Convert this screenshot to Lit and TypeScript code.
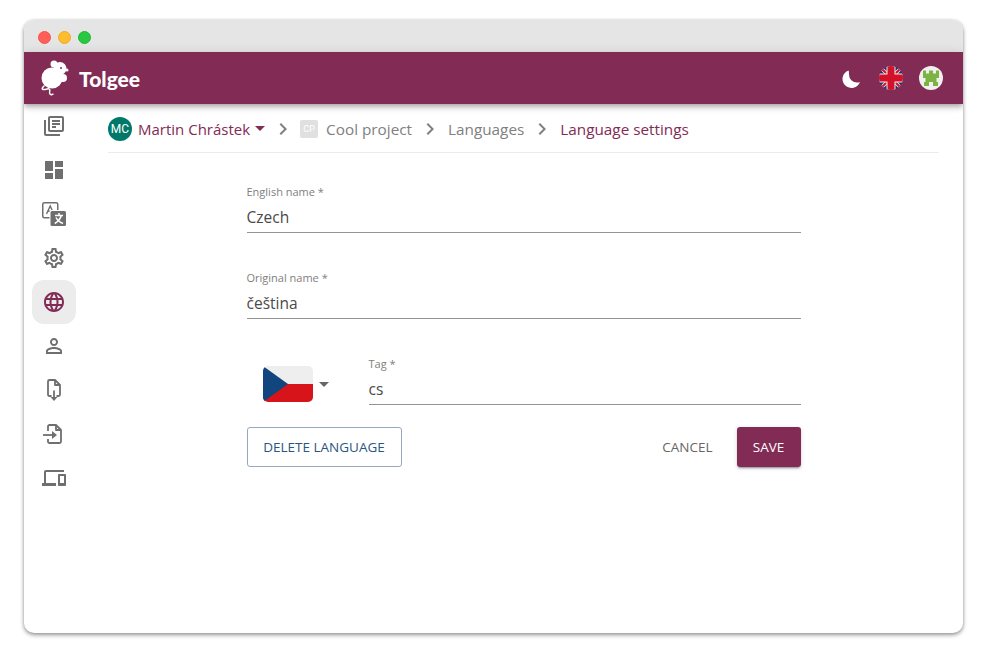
import { LitElement, html, css, svg } from "lit";
import { customElement } from "lit/decorators.js";

const ICONS = [
  svg`<path d="M4 6H2v14c0 1.1.9 2 2 2h14v-2H4V6zm16-4H8c-1.1 0-2 .9-2 2v12c0 1.1.9 2 2 2h12c1.1 0 2-.9 2-2V4c0-1.1-.9-2-2-2zm0 14H8V4h12v12zM10 9h8v2h-8zm0 3h4v2h-4zm0-6h8v2h-8z"/>`,
  svg`<path d="M3 13h8V3H3v10zm0 8h8v-6H3v6zm10 0h8V11h-8v10zm0-18v6h8V3h-8z"/>`,
  svg`<rect x=".75" y=".75" width="15" height="15" rx="1.500" fill="none" stroke="currentColor" stroke-width="1.500"/>
    <path d="M4.500 12L8.200 4l3.700 8M5.800 9.300h4.800" fill="none" stroke="currentColor" stroke-width="1.400"/>
    <rect x="7.500" y="8" width="16.500" height="16" rx="1.500" fill="#fff"/>
    <rect x="8.500" y="9" width="15.500" height="15" rx="1.500"/>
    <path d="M17 11v2.500M13 13.500h8M19.200 13.500c-.6 3-3 6-6.400 8M14 15.500c1.200 2.500 3.500 4.700 7 6" fill="none" stroke="#fff" stroke-width="1.500"/>`,
  svg`<path d="M19.43 12.98c.04-.32.07-.64.07-.98 0-.34-.03-.66-.07-.98l2.11-1.65c.19-.15.24-.42.12-.64l-2-3.46c-.09-.16-.26-.25-.44-.25-.06 0-.12.01-.17.03l-2.490 1c-.52-.4-1.080-.73-1.690-.98l-.38-2.650C14.460 2.180 14.250 2 14 2h-4c-.25 0-.46.18-.49.42l-.38 2.650c-.61.25-1.170.59-1.690.98l-2.490-1c-.06-.02-.12-.03-.18-.03-.17 0-.34.09-.43.25l-2 3.460c-.13.22-.07.49.12.64l2.110 1.650c-.04.32-.07.65-.07.98 0 .33.03.66.07.98l-2.110 1.650c-.19.15-.24.42-.12.64l2 3.460c.09.16.26.25.44.25.06 0 .12-.01.17-.03l2.490-1c.52.4 1.080.73 1.690.98l.38 2.650c.03.24.24.42.49.42h4c.25 0 .46-.18.49-.42l.38-2.650c.61-.25 1.170-.59 1.690-.98l2.490 1c.06.02.12.03.18.03.17 0 .34-.09.43-.25l2-3.460c.12-.22.07-.49-.12-.64l-2.110-1.650zm-1.980-1.710c.04.31.05.52.05.73 0 .21-.02.43-.05.73l-.14 1.130.89.7 1.080.84-.7 1.210-1.270-.51-1.040-.42-.9.68c-.43.32-.84.56-1.250.73l-1.060.43-.16 1.130-.2 1.350h-1.400l-.19-1.350-.16-1.130-1.060-.43c-.43-.18-.83-.41-1.230-.71l-.91-.7-1.060.43-1.270.51-.7-1.210 1.080-.84.89-.7-.14-1.130c-.03-.31-.05-.54-.05-.74s.02-.43.05-.73l.14-1.130-.89-.7-1.080-.84.7-1.210 1.270.51 1.040.42.9-.68c.43-.32.84-.56 1.250-.73l1.060-.43.16-1.130.2-1.350h1.390l.19 1.350.16 1.130 1.060.43c.43.18.83.41 1.230.71l.91.7 1.060-.43 1.270-.51.7 1.210-1.070.85-.89.7.14 1.130zM12 8c-2.210 0-4 1.790-4 4s1.790 4 4 4 4-1.790 4-4-1.790-4-4-4zm0 6c-1.100 0-2-.9-2-2s.9-2 2-2 2 .9 2 2-.9 2-2 2z"/>`,
  svg`<path d="M11.99 2C6.47 2 2 6.48 2 12s4.47 10 9.99 10C17.52 22 22 17.52 22 12S17.52 2 11.99 2zm6.93 6h-2.950c-.32-1.250-.78-2.450-1.380-3.560 1.840.63 3.370 1.910 4.330 3.560zM12 4.040c.83 1.200 1.480 2.530 1.910 3.960h-3.820c.43-1.430 1.080-2.760 1.910-3.960zM4.260 14C4.100 13.360 4 12.690 4 12s.1-1.360.26-2h3.380c-.08.66-.14 1.320-.14 2 0 .68.06 1.340.14 2H4.260zm.82 2h2.950c.32 1.250.78 2.450 1.380 3.560-1.840-.63-3.370-1.900-4.330-3.560zm2.950-8H5.080c.96-1.660 2.490-2.930 4.330-3.560C8.810 5.550 8.350 6.750 8.030 8zM12 19.960c-.83-1.200-1.480-2.530-1.910-3.960h3.820c-.43 1.430-1.080 2.760-1.910 3.960zM14.340 14H9.660c-.09-.66-.16-1.320-.16-2 0-.68.07-1.350.16-2h4.680c.09.65.16 1.320.16 2 0 .68-.07 1.340-.16 2zm.25 5.560c.6-1.110 1.060-2.310 1.380-3.560h2.950c-.96 1.650-2.490 2.930-4.330 3.560zM16.360 14c.08-.66.14-1.320.14-2 0-.68-.06-1.340-.14-2h3.380c.16.64.26 1.310.26 2s-.1 1.360-.26 2h-3.380z"/>`,
  svg`<path d="M12 5.900c1.160 0 2.100.94 2.100 2.100s-.94 2.100-2.100 2.100S9.900 9.160 9.900 8s.94-2.100 2.100-2.100m0 9c2.970 0 6.100 1.460 6.100 2.100v1.100H5.900V17c0-.64 3.130-2.100 6.100-2.100M12 4C9.790 4 8 5.790 8 8s1.790 4 4 4 4-1.790 4-4-1.790-4-4-4zm0 9c-2.670 0-8 1.340-8 4v3h16v-3c0-2.660-5.330-4-8-4z"/>`,
  svg`<g fill="none" stroke="currentColor" stroke-width="1.800" stroke-linejoin="round"><path d="M9.500 18H7.500A1.500 1.500 0 0 1 6 16.500v-13A1.500 1.500 0 0 1 7.500 2H13l5 5v9.500a1.500 1.500 0 0 1-1.500 1.500H14.500"/><path d="M13 2v5h5"/><path d="M12 12.500v7"/></g><path d="M8.500 19h7L12 23z"/>`,
  svg`<g fill="none" stroke="currentColor" stroke-width="1.800" stroke-linejoin="round"><path d="M6 9V4.500A1.500 1.500 0 0 1 7.500 3H14l5 5v11.500a1.500 1.500 0 0 1-1.500 1.500h-10A1.500 1.500 0 0 1 6 19.500V17"/><path d="M14 3v5h5"/><path d="M1 13h9"/></g><path d="M10 9l5 4-5 4z"/>`,
  svg`<path d="M4 6h18V4H4c-1.100 0-2 .9-2 2v11H0v3h14v-3H4V6zm19 2h-6c-.55 0-1 .45-1 1v10c0 .55.45 1 1 1h6c.55 0 1-.45 1-1V9c0-.55-.45-1-1-1zm-1 9h-4v-7h4v7z"/>`,
];

@customElement("app-root")
export class AppRoot extends LitElement {
  static styles = css`
    :host {
      display: block;
      width: 987px;
      height: 661px;
      padding: 20px 24px 28px;
      box-sizing: border-box;
      background: #fff;
      font-family: "Open Sans", "Noto Sans", sans-serif;
    }
    .window {
      height: 613px;
      border-radius: 10px;
      overflow: hidden;
      display: flex;
      flex-direction: column;
      background: #fff;
      box-shadow: 0 2px 4px 0 rgba(0, 0, 0, 0.4), 0 0 3px rgba(0, 0, 0, 0.12);
    }
    .chrome {
      height: 32px;
      box-sizing: border-box;
      padding: 2px 0 0 14px;
      background: #e5e5e5;
      display: flex;
      align-items: center;
      gap: 7px;
      flex: none;
    }
    .dot {
      width: 13px;
      height: 13px;
      border-radius: 50%;
      box-sizing: border-box;
    }
    .red { background: #ff5f57; border: 1px solid #f0544c; }
    .yellow { background: #febc2e; border: 1px solid #eeac22; }
    .green { background: #28c840; border: 1px solid #1fb836; }
    .appbar {
      height: 52px;
      flex: none;
      background: #822b55;
      display: flex;
      align-items: center;
      padding: 0 20px 0 16px;
      position: relative;
      z-index: 1;
      box-shadow: 0 2px 4px -1px rgba(0, 0, 0, 0.2), 0 4px 5px 0 rgba(0, 0, 0, 0.14), 0 1px 10px 0 rgba(0, 0, 0, 0.12);
    }
    .brand {
      display: flex;
      align-items: center;
      gap: 9px;
      color: #fff;
      font: 900 21px/1 "Lato", sans-serif;
    }
    .brand svg { display: block; }
    .spacer { flex: 1; }
    .actions {
      display: flex;
      align-items: center;
      gap: 16px;
    }
    .actions svg { display: block; }
    .body {
      flex: 1;
      display: flex;
      min-height: 0;
    }
    .side {
      width: 84px;
      flex: none;
      display: flex;
      flex-direction: column;
      align-items: center;
      padding-right: 24px;
      box-sizing: border-box;
    }
    .item {
      width: 44px;
      height: 44px;
      flex: none;
      display: flex;
      align-items: center;
      justify-content: center;
      color: #6f6f6f;
      border-radius: 12px;
    }
    .item.on {
      background: #ececec;
      color: #822b55;
    }
    .item svg {
      width: 24px;
      height: 24px;
      fill: currentColor;
    }
    .main {
      flex: 1;
      padding-right: 24px;
      display: flex;
      flex-direction: column;
    }
    .crumbs {
      height: 49px;
      flex: none;
      box-sizing: border-box;
      border-bottom: 1px solid #ececec;
      display: flex;
      align-items: center;
      font-size: 15.3px;
      color: #808080;
      padding-top: 1px;
    }
    .crumbs .link { color: #822b55; }
    .crumbs .org { font-size: 15px; }
    .crumbs .gt {
      width: 24px;
      height: 24px;
      margin: 0 6px;
      fill: #808080;
      flex: none;
    }
    .avatar {
      width: 24px;
      height: 24px;
      border-radius: 50%;
      background: #00796b;
      color: #fff;
      font: 12px "Roboto", sans-serif;
      display: flex;
      align-items: center;
      justify-content: center;
      margin-right: 6px;
      flex: none;
    }
    .square {
      width: 18px;
      height: 18px;
      border-radius: 2px;
      background: #e0e0e0;
      color: #fff;
      font: 9px "Roboto", sans-serif;
      display: flex;
      align-items: center;
      justify-content: center;
      margin: 0 8px 0 -1px;
      flex: none;
    }
    .caret {
      width: 0;
      height: 0;
      border-left: 5px solid transparent;
      border-right: 5px solid transparent;
      border-top: 5px solid #822b55;
      margin-left: 5px;
    }
    .form {
      width: 554px;
      align-self: center;
      padding-top: 31px;
      display: flex;
      flex-direction: column;
      gap: 37px;
    }
    .field {
      display: flex;
      flex-direction: column;
      flex: 1;
    }
    .field label {
      font-size: 11px;
      line-height: 16px;
      color: #808080;
    }
    .field .value {
      margin-top: 5px;
      font-size: 15.5px;
      line-height: 24px;
      padding-bottom: 3px;
      color: #4a4a4a;
      border-bottom: 1px solid #949494;
    }
    .tagrow {
      display: flex;
      align-items: flex-end;
    }
    .flagpick {
      width: 122px;
      flex: none;
      display: flex;
      align-items: center;
      padding: 0 0 3px 16px;
      box-sizing: border-box;
      gap: 6px;
    }
    .flagpick svg { display: block; }
    .flagpick .caret { border-top-color: #666; margin: 0; }
    .buttons {
      display: flex;
      align-items: center;
      margin-top: -15px;
    }
    button {
      font-family: inherit;
      font-size: 13.5px;
      height: 40px;
      box-sizing: border-box;
      border-radius: 3px;
      background: none;
      border: none;
      padding: 0 16px;
      text-transform: uppercase;
    }
    .delete {
      color: #2b5582;
      border: 1px solid #95aac1;
      width: 155px;
      padding: 0;
    }
    .cancel {
      color: #666;
      margin-right: 8px;
    }
    .save {
      background: #822b55;
      color: #fff;
      width: 64px;
      padding: 0;
      box-shadow: 0 3px 1px -2px rgba(0, 0, 0, 0.2), 0 2px 2px 0 rgba(0, 0, 0, 0.14), 0 1px 5px 0 rgba(0, 0, 0, 0.12);
    }
  `;

  renderLogo() {
    return html`<svg width="30" height="38" viewBox="0 0 30 38" fill="#fff">
      <ellipse cx="12" cy="19" rx="10.500" ry="10.500"/>
      <circle cx="20" cy="9.500" r="6.500"/>
      <circle cx="14" cy="5" r="3.500"/>
      <circle cx="27" cy="11" r="1.500"/>
      <circle cx="23" cy="19" r="4"/>
      <circle cx="21" cy="9" r="1" fill="#822b55"/>
      <path d="M4 27c-1.500 1.500-2.500 3-1 3.500 2 .6 4-1 6-.6 2.200.5-.5 3.200 1 5.100.6.700 2 .7 3 .2" fill="none" stroke="#fff" stroke-width="1.500" stroke-linecap="round"/>
    </svg>`;
  }

  renderUk() {
    return html`<svg width="24" height="24" viewBox="0 0 24 24">
      <defs><clipPath id="uk"><circle cx="12" cy="12" r="12"/></clipPath></defs>
      <g clip-path="url(#uk)">
        <rect width="24" height="24" fill="#1f2f74"/>
        <path d="M0 0L24 24M24 0L0 24" stroke="#eee" stroke-width="3.500"/>
        <path d="M0 0L24 24M24 0L0 24" stroke="#d3122a" stroke-width="2"/>
        <path d="M12 0V24M0 12H24" stroke="#eee" stroke-width="9"/>
        <path d="M12 0V24M0 12H24" stroke="#d3122a" stroke-width="7"/>
      </g>
    </svg>`;
  }

  renderInvader() {
    return html`<svg width="24" height="24" viewBox="0 0 24 24">
      <circle cx="12" cy="12" r="12" fill="#f0f0f0"/>
      <path fill="#7cb342" d="M4 4.500h3v3h3v-3h4v3h3v-3h3V12h-2.500v4H19v4h-5v-4h-4v4H5v-4h1.500v-4H4z"/>
    </svg>`;
  }

  render() {
    const gt = html`<svg class="gt" viewBox="0 0 24 24"><path d="M10 6L8.590 7.410 13.170 12l-4.580 4.590L10 18l6-6z"/></svg>`;
    return html`
      <div class="window">
        <div class="chrome">
          <span class="dot red"></span><span class="dot yellow"></span><span class="dot green"></span>
        </div>
        <div class="appbar">
          <div class="brand">${this.renderLogo()}<span>Tolgee</span></div>
          <div class="spacer"></div>
          <div class="actions">
            <svg width="24" height="24" viewBox="0 0 24 24" fill="#fff">
              <path d="M9.500 3.500a9 9 0 1 0 11.500 11.500c-1 .4-2 .5-3 .5a8 8 0 0 1-8-8c0-1.500 0-3 -.5-4z" transform="translate(0 1)"/>
            </svg>
            ${this.renderUk()} ${this.renderInvader()}
          </div>
        </div>
        <div class="body">
          <nav class="side">
            ${ICONS.map(
              (icon, i) => html`<div class="item ${i === 4 ? "on" : ""}"><svg viewBox="0 0 24 24">${icon}</svg></div>`
            )}
          </nav>
          <div class="main">
            <div class="crumbs">
              <span class="avatar">MC</span>
              <span class="link org">Martin Chrástek</span>
              <span class="caret"></span>
              ${gt}
              <span class="square">CP</span>
              <span>Cool project</span>
              ${gt}
              <span>Languages</span>
              ${gt}
              <span class="link">Language settings</span>
            </div>
            <div class="form">
              <div class="field">
                <label>English name *</label>
                <div class="value">Czech</div>
              </div>
              <div class="field">
                <label>Original name *</label>
                <div class="value">čeština</div>
              </div>
              <div class="tagrow">
                <div class="flagpick">
                  <svg width="50" height="36" viewBox="0 0 50 36">
                    <defs><clipPath id="cz"><rect width="50" height="36" rx="5"/></clipPath></defs>
                    <g clip-path="url(#cz)">
                      <rect width="50" height="18" fill="#eeeeee"/>
                      <rect y="18" width="50" height="18" fill="#d7141a"/>
                      <path d="M0 0L25 18L0 36z" fill="#11457e"/>
                    </g>
                  </svg>
                  <span class="caret"></span>
                </div>
                <div class="field">
                  <label>Tag *</label>
                  <div class="value">cs</div>
                </div>
              </div>
              <div class="buttons">
                <button class="delete">Delete language</button>
                <div class="spacer"></div>
                <button class="cancel">Cancel</button>
                <button class="save">Save</button>
              </div>
            </div>
          </div>
        </div>
      </div>
    `;
  }
}
